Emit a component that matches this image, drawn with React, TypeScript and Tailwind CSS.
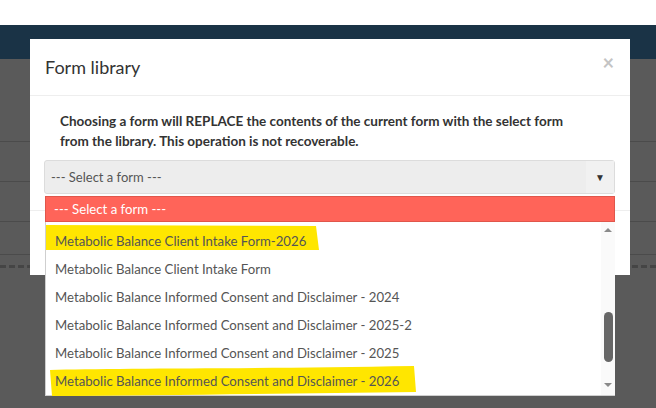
import React from 'react';

const options = [
  { label: 'Metabolic Balance Client Intake Form-2026', mark: 'short' },
  { label: 'Metabolic Balance Client Intake Form' },
  { label: 'Metabolic Balance Informed Consent and Disclaimer - 2024' },
  { label: 'Metabolic Balance Informed Consent and Disclaimer - 2025-2' },
  { label: 'Metabolic Balance Informed Consent and Disclaimer - 2025' },
  { label: 'Metabolic Balance Informed Consent and Disclaimer - 2026', mark: 'long' },
];

// yellow highlighter strokes drawn over the screenshot
function Marker({ kind }: { kind: string }) {
  if (kind === 'short') {
    return (
      <svg className="absolute left-0 top-[-2px]" width="275" height="26" viewBox="0 0 275 26">
        <path d="M0 0 L270 1 L273 25 L0 25 Z" fill="#ffe600" />
      </svg>
    );
  }
  return (
    <svg className="absolute left-[2px] top-[-1px]" width="370" height="32" viewBox="0 0 370 32">
      <path d="M2 4 C60 2 200 3 366 0 L368 26 C250 27 120 30 4 30 Z" fill="#ffe600" />
    </svg>
  );
}

export default function App() {
  return (
    <div className="relative w-[656px] h-[408px] overflow-hidden bg-[#5a5a5a] font-['Lato',sans-serif]">
      {/* Page behind overlay */}
      <div className="h-[25px] bg-white" />
      <div className="h-[34px] bg-[#1a3346]" />
      <div className="h-[83px] border-b border-[#4b4b4b]" />
      <div className="h-[40px] border-b border-[#4b4b4b]" />
      <div className="h-[40px] border-b border-[#4b4b4b]" />
      <div className="h-[33px] border-b border-[#4b4b4b]" />
      <div className="mt-[10px] border-t-[3px] border-dashed border-[#454545]" />

      {/* Modal */}
      <div className="absolute left-[30px] top-[39px] w-[600px] h-[236px] bg-white">
        <div className="flex items-center justify-between h-[57px] px-[15px] border-b border-[#eeeeee]">
          <h4 className="text-[18px] text-[#333] leading-none">Form library</h4>
          <span className="text-[20px] leading-none text-[#c4c4c4] font-bold mr-[1px] -mt-[10px]">×</span>
        </div>
        <div className="px-[14px] pt-[15px]">
          <p className="ml-[16px] w-[530px] text-[13.5px] leading-[20px] font-bold text-[#333]">
            Choosing a form will REPLACE the contents of the current form with the select form from the library. This
            operation is not recoverable.
          </p>
          <div className="mt-[9px] flex h-[34px] w-[571px] rounded-[3px] border border-[#dcdcdc] bg-[#ededed]">
            <span className="flex-1 pl-[6px] text-[13px] leading-[32px] text-[#555]">--- Select a form ---</span>
            <span className="flex w-[28px] items-center justify-center bg-[#f1f1f1] text-[10px] text-[#333]">▼</span>
          </div>
        </div>
        <div className="mt-[16px] border-t border-[#eeeeee]" />
      </div>

      {/* Open dropdown list */}
      <div className="absolute left-[45px] top-[196px] w-[570px]">
        <div className="h-[26px] border border-[#e0564b] bg-[#ff6459] pl-[8px] text-[13.2px] leading-[24px] text-white">
          --- Select a form ---
        </div>
        <div className="flex h-[174px] border-b border-l border-[#cfcfcf] bg-white">
          <ul className="flex-1 pt-[5px]">
            {options.map((o) => (
              <li key={o.label} className="relative h-[28px] pl-[9px] text-[13.2px] leading-[28px] text-[#555]">
                {o.mark && <Marker kind={o.mark} />}
                <span className="relative">{o.label}</span>
              </li>
            ))}
          </ul>
          <div className="flex w-[14px] flex-col items-center bg-[#fafafa] pt-[6px] pb-[8px]">
            <span className="h-0 w-0 border-x-[4px] border-b-[4px] border-x-transparent border-b-[#8a8a8a]" />
            <span className="mt-[80px] h-[50px] w-[9px] rounded-full bg-[#676767]" />
            <span className="mt-auto h-0 w-0 border-x-[4px] border-t-[4px] border-x-transparent border-t-[#8a8a8a]" />
          </div>
        </div>
      </div>
    </div>
  );
}
